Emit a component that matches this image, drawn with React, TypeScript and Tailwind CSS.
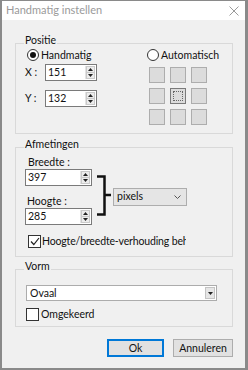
import React from 'react';

const Spinner: React.FC = () => (
    <div className="flex flex-col w-[10px] h-full border-l border-[#e3e3e3]">
        <div className="flex-1 flex items-center justify-center bg-[#ececec] border border-[#c9c9c9]">
            <svg width="5" height="3" viewBox="0 0 5 3"><path d="M0 3 L2.5 0 L5 3 Z" fill="#222" /></svg>
        </div>
        <div className="flex-1 flex items-center justify-center bg-[#ececec] border border-t-0 border-[#c9c9c9]">
            <svg width="5" height="3" viewBox="0 0 5 3"><path d="M0 0 L2.5 3 L5 0 Z" fill="#222" /></svg>
        </div>
    </div>
);

const NumberBox: React.FC<{ value: string; className: string }> = ({ value, className }) => (
    <div className={`flex h-[17px] bg-white border border-[#7a7a7a] ${className}`}>
        <span className="flex-1 pl-[2px] leading-[15px]">{value}</span>
        <div className="p-[1px] h-full"><Spinner /></div>
    </div>
);

const Radio: React.FC<{ checked?: boolean; label: string }> = ({ checked, label }) => (
    <div className="flex items-center h-[12px]">
        <div className="w-[12px] h-[12px] rounded-full border border-[#333] bg-white flex items-center justify-center">
            {checked && <div className="w-[6px] h-[6px] rounded-full bg-[#111]" />}
        </div>
        <span className="ml-[2px] leading-none">{label}</span>
    </div>
);

const Check: React.FC<{ checked?: boolean }> = ({ checked }) => (
    <div className="w-[13px] h-[13px] border border-[#333] bg-white flex items-center justify-center shrink-0">
        {checked && (
            <svg width="10" height="9" viewBox="0 0 10 9"><path d="M1 4.5 L3.8 7.5 L9 1" fill="none" stroke="#222" strokeWidth="1.2" /></svg>
        )}
    </div>
);

const Group: React.FC<{ title: string; className: string; children: React.ReactNode }> = ({ title, className, children }) => (
    <div className={`relative border border-[#d9d9d9] ${className}`}>
        <span className="absolute left-[8px] top-[-10px] px-[1px] bg-[#f0f0f0] leading-[13px]">{title}</span>
        {children}
    </div>
);

const Square: React.FC<{ active?: boolean }> = ({ active }) => (
    <div className={`w-[16px] h-[16px] bg-[#dcdcdc] border ${active ? 'border-[#7a7a7a] p-[2px]' : 'border-[#adadad]'}`}>
        {active && <div className="w-full h-full border border-dotted border-[#666]" />}
    </div>
);

export default function App() {
    return (
        <div className="w-[248px] h-[370px] flex flex-col bg-[#f0f0f0] border-t border-l-2 border-r-[3px] border-b-2 border-[#8a8a8a] font-['Lato',sans-serif] text-[10.5px] text-[#111] overflow-hidden">
            <div className="h-[19px] bg-white flex items-center justify-between pl-[4px] pr-[6px]">
                <span className="text-[11px] text-[#9a9a9a]">Handmatig instellen</span>
                <svg width="10" height="10" viewBox="0 0 10 10"><path d="M0.5 0.5 L9.5 9.5 M9.5 0.5 L0.5 9.5" stroke="#9a9a9a" strokeWidth="1" /></svg>
            </div>

            <div className="flex-1 flex flex-col pl-[13px] pr-[12px]">
                <Group title="Positie" className="mt-[23px] h-[91px] flex">
                    <div className="w-[122px] pl-[9px] pt-[5px] flex flex-col">
                        <div className="ml-[2px]"><Radio checked label="Handmatig" /></div>
                        <div className="flex items-center mt-[3px]">
                            <span className="w-[20px]">X :</span>
                            <NumberBox value="151" className="w-[52px]" />
                        </div>
                        <div className="flex items-center mt-[9px]">
                            <span className="w-[20px]">Y :</span>
                            <NumberBox value="132" className="w-[52px]" />
                        </div>
                    </div>
                    <div className="pt-[5px] pl-[9px] flex flex-col">
                        <Radio label="Automatisch" />
                        <div className="ml-[2px] mt-[6px] grid grid-cols-3 gap-[5px] w-[58px]">
                            <Square /><Square /><Square />
                            <Square /><Square active /><Square />
                            <Square /><Square /><Square />
                        </div>
                    </div>
                </Group>

                <Group title="Afmetingen" className="mt-[13px] h-[110px] flex flex-col">
                    <div className="flex pl-[9px] pt-[8px]">
                        <div className="flex flex-col w-[67px]">
                            <span className="ml-[3px] leading-[13px]">Breedte :</span>
                            <NumberBox value="397" className="w-[67px]" />
                            <span className="ml-[2px] mt-[9px] leading-[13px]">Hoogte :</span>
                            <NumberBox value="285" className="w-[67px]" />
                        </div>
                        <svg className="mt-[19px] ml-[4px]" width="15" height="41" viewBox="0 0 15 41">
                            <path d="M1 1.5 H8.5 V39.5 H1 M8.5 20 H15" fill="none" stroke="#111" strokeWidth="2.5" />
                        </svg>
                        <div className="mt-[32px] ml-[2px] w-[74px] h-[18px] bg-[#e5e5e5] border border-[#adadad] flex items-center justify-between pl-[3px] pr-[5px]">
                            <span>pixels</span>
                            <svg width="7" height="4" viewBox="0 0 7 4"><path d="M0.5 0.5 L3.5 3.5 L6.5 0.5" fill="none" stroke="#555" strokeWidth="1" /></svg>
                        </div>
                    </div>
                    <div className="flex items-center ml-[12px] mt-[9px] w-[158px] overflow-hidden">
                        <Check checked />
                        <span className="ml-[1px] whitespace-nowrap tracking-[-0.15px]">Hoogte/breedte-verhouding beh</span>
                    </div>
                </Group>

                <Group title="Vorm" className="mt-[12px] h-[58px] flex flex-col">
                    <div className="ml-[10px] mt-[15px] w-[191px] h-[16px] bg-white border border-[#acacac] flex">
                        <span className="flex-1 pl-[3px] leading-[14px]">Ovaal</span>
                        <div className="w-[12px] h-full p-[1px]">
                            <div className="w-full h-full bg-[#e6e6e6] border border-[#c4c4c4] flex items-center justify-center">
                                <svg width="5" height="3" viewBox="0 0 5 3"><path d="M0 0 L2.5 3 L5 0 Z" fill="#222" /></svg>
                            </div>
                        </div>
                    </div>
                    <div className="flex items-center ml-[10px] mt-[6px]">
                        <Check />
                        <span className="ml-[2px]">Omgekeerd</span>
                    </div>
                </Group>

                <div className="flex justify-end gap-[9px] mt-[12px]">
                    <button className="w-[57px] h-[18px] bg-[#e1e1e1] border-2 border-[#0078d7] leading-none">Ok</button>
                    <button className="w-[60px] h-[18px] bg-[#e1e1e1] border border-[#adadad] leading-none">Annuleren</button>
                </div>
            </div>
        </div>
    );
}
